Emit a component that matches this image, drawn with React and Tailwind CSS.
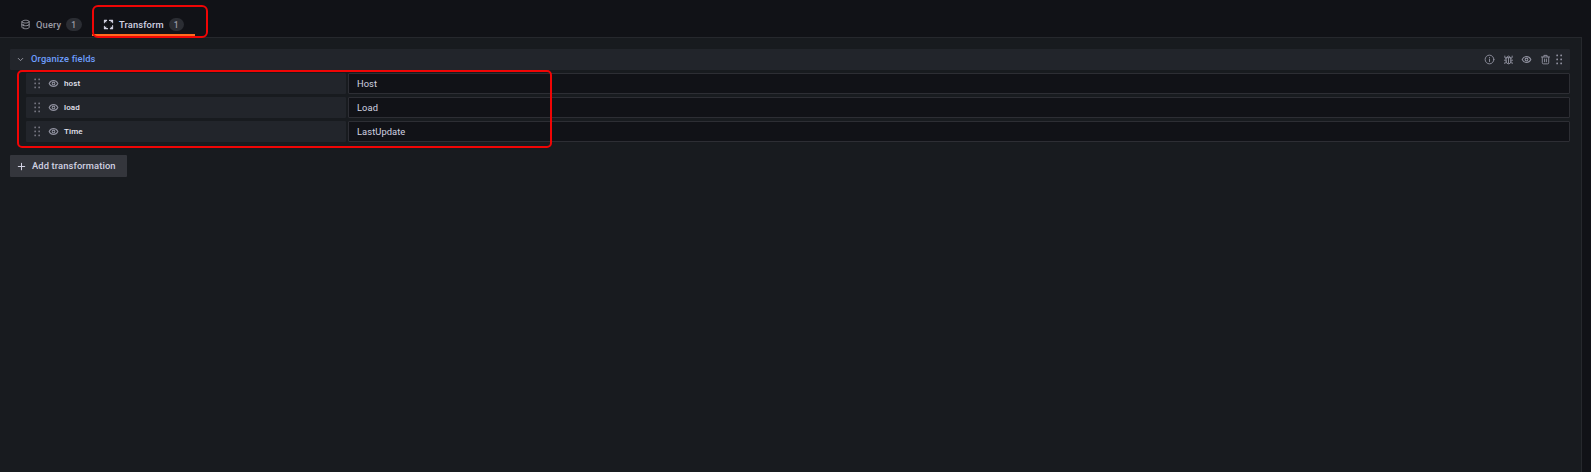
import React from 'react';

function Icon({ className = '', sw = 2, children }) {
  return (
    <svg
      viewBox="0 0 24 24"
      fill="none"
      stroke="currentColor"
      strokeWidth={sw}
      strokeLinecap="round"
      strokeLinejoin="round"
      className={`shrink-0 ${className}`}
    >
      {children}
    </svg>
  );
}

const Database = (p) => (
  <Icon {...p} sw={2}>
    <path d="M4 6c0-4.500 16-4.500 16 0v12c0 4.500-16 4.500-16 0zM4 6c0 4 16 4 16 0M4 12c0 4 16 4 16 0M8 12v.2M8 18v.2" />
  </Icon>
);

const Process = (p) => (
  <Icon {...p} sw={2.2}>
    <path d="M3 8V3h5M14 3h7M21 3v5M21 14v7M21 21h-5M10 21H3M3 21v-5M3.500 3.500l3 3M20.500 3.500l-3 3M20.500 20.500l-3-3M3.500 20.500l3-3" />
  </Icon>
);

const Eye = (p) => (
  <Icon {...p} sw={2.2}>
    <path d="M2.500 12c2-4.200 5-6.500 9.500-6.500s7.500 2.300 9.500 6.500c-2 4.200-5 6.500-9.500 6.500S4.500 16.200 2.500 12z" />
    <circle cx="12" cy="12" r="3" />
  </Icon>
);

const Info = (p) => (
  <Icon {...p}>
    <circle cx="12" cy="12" r="9.500" />
    <path d="M12 11v5.500M12 7.500v.2" />
  </Icon>
);

const Bug = (p) => (
  <Icon {...p}>
    <path d="M7 8h10v8.500a5 5 0 0 1-10 0zM8.500 8a3.500 3.500 0 0 1 7 0M12 9v11M7 13.500H3M21 13.500h-4M7 9.500L4 8V4.500M17 9.500L20 8V4.500M7 17l-3 1.500V21M17 17l3 1.500V21" />
  </Icon>
);

const Trash = (p) => (
  <Icon {...p}>
    <path d="M3 6.500h18M8.500 6V3h7v3M5 7v12a2.500 2.500 0 0 0 2.500 2.500h9A2.500 2.500 0 0 0 19 19V7M10 11v6M14 11v6" />
  </Icon>
);

const Chevron = (p) => (
  <Icon {...p}>
    <path d="M7 9.500l5 5 5-5" />
  </Icon>
);

const Plus = (p) => (
  <Icon {...p} sw={2.200}>
    <path d="M12 5v14M5 12h14" />
  </Icon>
);

function Grip({ className = '' }) {
  return (
    <svg viewBox="0 0 7 11" fill="currentColor" className={`h-[11px] w-[7px] shrink-0 ${className}`}>
      {[0.5, 4.5, 8.5].map((y) => (
        <g key={y}>
          <rect x="0.300" y={y} width="1.700" height="1.700" rx="0.500" />
          <rect x="4.300" y={y} width="1.700" height="1.700" rx="0.500" />
        </g>
      ))}
    </svg>
  );
}

function Badge({ className = '' }) {
  return (
    <span className={`flex h-[13px] w-[15.500px] items-center justify-center rounded-full bg-[#2b2d33] text-[8.500px] font-medium text-[#9a9ba5] ${className}`}>
      1
    </span>
  );
}

const fields = [
  { name: 'host', label: 'Host' },
  { name: 'load', label: 'Load' },
  { name: 'Time', label: 'LastUpdate' },
];

export default function App() {
  return (
    <div className="relative flex h-[472px] w-[1591px] flex-col overflow-hidden bg-[#111217] font-['Roboto',sans-serif] text-[9.330px] leading-[14px] text-[#d2d2e2]">
      <div className="flex h-[37px] shrink-0 items-end">
        <div className="ml-[20px] flex h-[25px] w-[72px] items-start text-[#9a9ba5]">
          <Database className="mt-[7px] h-[11px] w-[11px]" />
          <span className="ml-[5px] mt-[6px] w-[30px] font-medium tracking-[0.014em]">Query</span>
          <Badge className="mt-[6px]" />
        </div>
        <div className="mb-px flex h-6 w-[103px] items-start border-b-2 border-[#ff6a1f] pl-[11px]">
          <Process className="mt-[7px] h-[11px] w-[11px]" />
          <span className="ml-[5px] mt-[6px] w-[49.500px] font-medium tracking-[0.014em]">Transform</span>
          <Badge className="mt-[6px]" />
        </div>
      </div>

      <div className="flex w-[1582px] grow flex-col border-r border-t border-[#26282d] bg-[#181b1f] pl-[10px] pr-[11px] pt-[11px]">
        <div className="flex h-[21px] items-center rounded-[1px] bg-[#22252b] pl-[5px] pr-[7px]">
          <Chevron className="h-[11px] w-[11px] text-[#9a9ba5]" />
          <span className="ml-[5px] mt-[-2px] grow font-medium tracking-[0.014em] text-[#6e9fff]">Organize fields</span>
          <div className="flex items-center text-[#9192a0]">
            <Info className="mr-2 h-[11px] w-[11px]" />
            <Bug className="mr-[7px] h-[11px] w-[11px]" />
            <Eye className="mr-2 h-[11px] w-[11px]" />
            <Trash className="mr-[5px] h-[11px] w-[11px]" />
            <Grip />
          </div>
        </div>

        <div className="mt-[3px] flex flex-col gap-[3px] pl-4">
          {fields.map((f) => (
            <div key={f.name} className="flex h-[21px] gap-[2px]">
              <div className="flex w-80 items-center rounded-[1px] bg-[#22252b] pl-2">
                <Grip className="text-[#74757f]" />
                <Eye className="ml-[7px] h-[11px] w-[11px] text-[#9192a0]" />
                <span className="ml-[5px] text-[8px] font-medium tracking-[0.018em] text-[#e4e4f0]">{f.name}</span>
              </div>
              <div className="flex grow items-center rounded-[1px] border border-[#2d2e34] bg-[#111217] pl-2 tracking-[0.008em]">
                {f.label}
              </div>
            </div>
          ))}
        </div>

        <button className="mt-[13px] flex h-[22px] w-[117px] items-center rounded-[1px] bg-[#34363c] pl-[6px] font-medium tracking-[0.014em]">
          <Plus className="h-[11px] w-[11px]" />
          <span className="ml-[5px] whitespace-nowrap">Add transformation</span>
        </button>
      </div>

      <div className="absolute left-[91.500px] top-[5px] h-[33px] w-[116px] rounded-[6px] border-2 border-[#f00505]" />
      <div className="absolute left-[16.500px] top-[69.500px] h-[78px] w-[535px] rounded-[5px] border-2 border-[#f00505]" />
    </div>
  );
}
